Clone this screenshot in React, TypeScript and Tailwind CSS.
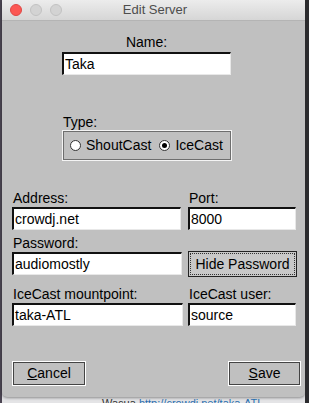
import React from 'react';

const font = "font-['Liberation_Sans',Arial,sans-serif]";

function Field({ label, value, className }: { label: string; value: string; className: string }) {
  return (
    <div className={`flex flex-col ${className}`}>
      <span className="text-[14px] leading-[16px] text-black pl-[1px]">{label}</span>
      <div className="mt-[1px] h-[23px] bg-white border-t-2 border-l-2 border-t-[#111] border-l-[#111] border-b border-r border-b-[#e8e8e8] border-r-[#e8e8e8] pl-[1px] text-[14px] leading-[20px] text-black">
        {value}
      </div>
    </div>
  );
}

function Radio({ label, checked }: { label: string; checked?: boolean }) {
  return (
    <div className="flex items-center gap-[5px]">
      <span className="w-[11px] h-[11px] rounded-full bg-white border border-[#333] flex items-center justify-center">
        {checked && <span className="w-[5px] h-[5px] rounded-full bg-black" />}
      </span>
      <span>{label}</span>
    </div>
  );
}

function Button({ children, className }: { children: React.ReactNode; className: string }) {
  return (
    <div className={`h-[25px] border border-white flex ${className}`}>
      <div className="flex-1 border border-[#444] flex items-center justify-center text-[14px]">{children}</div>
    </div>
  );
}

export default function App() {
  return (
    <div className={`w-[309px] h-[403px] overflow-hidden bg-[#e4e4e6] flex ${font}`}>
      <div className="w-[2px] bg-[#4b4552]" />
      <div className="flex flex-col w-[303px]">
        <div className="h-[397px] shrink-0 flex flex-col rounded-b-[5px] overflow-hidden bg-[#c0c0c0] shadow-[0_1px_3px_rgba(0,0,0,0.4)]">
          {/* title bar */}
          <div className="h-[21px] shrink-0 flex items-center relative bg-gradient-to-b from-[#ececec] to-[#d6d6d6] border-b border-[#b4b4b4]">
            <div className="flex gap-[8px] pl-[8px]">
              <span className="w-[12px] h-[12px] rounded-full bg-[#fc5753] border border-[#df4744]" />
              <span className="w-[12px] h-[12px] rounded-full bg-[#d3d3d3] border border-[#c2c2c2]" />
              <span className="w-[12px] h-[12px] rounded-full bg-[#d3d3d3] border border-[#c2c2c2]" />
            </div>
            <span className="absolute left-0 right-0 text-center text-[13px] text-[#4d4d4d] pl-[3px]">Edit Server</span>
          </div>

          {/* body */}
          <div className="flex flex-col text-black text-[14px]">
            <div className="ml-[60px] w-[169px] mt-[13px] flex flex-col">
              <span className="text-center leading-[16px]">Name:</span>
              <div className="mt-[2px] h-[23px] bg-white border-t-2 border-l-2 border-t-[#111] border-l-[#111] border-b border-r border-b-[#e8e8e8] border-r-[#e8e8e8] pl-[1px] leading-[20px]">
                Taka
              </div>
            </div>

            <div className="ml-[60px] w-[170px] mt-[39px] flex flex-col">
              <span className="leading-[16px] pl-[1px]">Type:</span>
              <div className="h-[31px] border border-[#f4f4f4] shadow-[inset_0_0_0_1px_#6e6e6e] flex items-center gap-[8px] pl-[7px]">
                <Radio label="ShoutCast" />
                <Radio label="IceCast" checked />
              </div>
            </div>

            <div className="flex ml-[10px] mt-[29px] gap-[7px]">
              <Field label="Address:" value="crowdj.net" className="w-[169px]" />
              <Field label="Port:" value="8000" className="w-[108px]" />
            </div>

            <div className="flex ml-[10px] mt-[5px] gap-[6px]">
              <Field label="Password:" value="audiomostly" className="w-[170px]" />
              <div className="w-[109px] pt-[16px]">
                <div className="h-[26px] border border-[#222] p-[1px] bg-[#c8c8c8]">
                  <div className="h-full border border-dotted border-[#333] flex items-center justify-center">Hide Password</div>
                </div>
              </div>
            </div>

            <div className="flex ml-[10px] mt-[9px] gap-[5px]">
              <Field label="IceCast mountpoint:" value="taka-ATL" className="w-[171px]" />
              <Field label="IceCast user:" value="source" className="w-[108px]" />
            </div>

            <div className="flex justify-between ml-[10px] mr-[4px] mt-[35px]">
              <Button className="w-[74px]">
                <span><span className="underline">C</span>ancel</span>
              </Button>
              <Button className="w-[73px]">
                <span><span className="underline">S</span>ave</span>
              </Button>
            </div>
          </div>
        </div>
        <div className="h-[6px] overflow-hidden pl-[100px] text-[11px] leading-[12px] text-[#2a6fb0] whitespace-nowrap">
          <span className="text-[#333]">Wacua </span>http://crowdj.net/taka-ATL
        </div>
      </div>
      <div className="w-[4px] bg-[#2b2b2e]" />
    </div>
  );
}
